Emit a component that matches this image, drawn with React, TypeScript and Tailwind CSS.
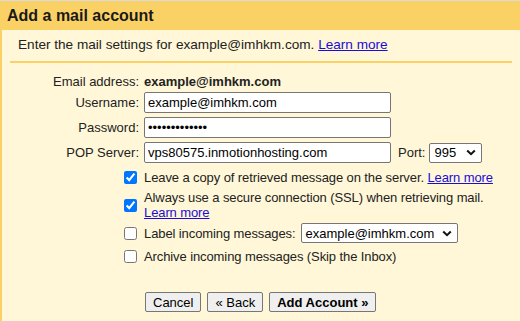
const Chevron = () => (
  <svg width="10" height="7" viewBox="0 0 10 7" className="shrink-0">
    <path d="M1.2 1.5 5 5.2 8.8 1.5" fill="none" stroke="#111" strokeWidth="2" />
  </svg>
);

const FakeSelect = ({ value, className }: { value: string; className: string }) => (
  <div
    className={`flex h-[20px] items-center justify-between rounded-[2px] border border-[#767676] bg-white pl-[4px] pr-[5px] text-black ${className}`}
  >
    <span className="whitespace-nowrap">{value}</span>
    <Chevron />
  </div>
);

const TextField = ({ value, type = 'text' }: { value: string; type?: string }) => (
  <input
    type={type}
    defaultValue={value}
    className="h-[21px] w-[247px] rounded-[2px] border border-[#767676] bg-white px-[3px] text-black outline-none"
  />
);

const Link = ({ children }: { children: string }) => (
  <a href="#" className="text-[#1a0dd6] underline">
    {children}
  </a>
);

export default function App() {
  return (
    <div className="h-[321px] w-[520px] overflow-hidden border-t border-[#dadada] bg-[#fff7d8] font-['Liberation_Sans',Arial,sans-serif] text-[13px] leading-[15px] text-[#222]">
      {/* Title bar */}
      <div className="flex h-[29px] items-center bg-[#fad165] pl-[7px]">
        <h1 className="text-[16px] font-bold leading-[20px] text-[#1a1a1a]">Add a mail account</h1>
      </div>

      <div className="h-full border-l-2 border-[#fad165]">
        <p className="whitespace-nowrap pl-[16px] pt-[7px] text-[13.6px] leading-[16px]">
          Enter the mail settings for example@imhkm.com. <Link>Learn more</Link>
        </p>
        <div className="ml-[8px] mt-[8px] h-[2px] w-[502px] bg-[#fad165]" />

        {/* Fields */}
        <div className="mt-[8px] flex h-[20px] items-center">
          <span className="w-[137px] text-right">Email address:</span>
          <span className="ml-[5px] font-bold">example@imhkm.com</span>
        </div>
        <div className="mt-[1px] flex h-[21px] items-center">
          <span className="w-[137px] text-right">Username:</span>
          <div className="ml-[5px]">
            <TextField value="example@imhkm.com" />
          </div>
        </div>
        <div className="mt-[4px] flex h-[21px] items-center">
          <span className="w-[137px] text-right">Password:</span>
          <div className="ml-[5px]">
            <TextField value="examplepass12" type="password" />
          </div>
        </div>
        <div className="mt-[4px] flex h-[21px] items-center">
          <span className="w-[137px] text-right">POP Server:</span>
          <div className="ml-[5px]">
            <TextField value="vps80575.inmotionhosting.com" />
          </div>
          <span className="ml-[7px]">Port:</span>
          <FakeSelect value="995" className="ml-[4px] w-[53px]" />
        </div>

        {/* Options */}
        <div className="tracking-[-0.1px]">
          <div className="mt-[5px] flex h-[18px] items-center pl-[122px]">
            <input type="checkbox" defaultChecked className="h-[13px] w-[13px]" />
            <span className="ml-[7px] whitespace-nowrap">
              Leave a copy of retrieved message on the server. <Link>Learn more</Link>
            </span>
          </div>
          <div className="mt-[4px] flex items-center pl-[122px]">
            <input type="checkbox" defaultChecked className="h-[13px] w-[13px]" />
            <span className="ml-[7px] whitespace-nowrap">
              Always use a secure connection (SSL) when retrieving mail.
              <br />
              <Link>Learn more</Link>
            </span>
          </div>
          <div className="mt-[2px] flex h-[22px] items-center pl-[122px]">
            <input type="checkbox" className="h-[13px] w-[13px]" />
            <span className="ml-[7px] whitespace-nowrap">Label incoming messages:</span>
            <FakeSelect value="example@imhkm.com" className="ml-[5px] w-[157px] tracking-normal" />
          </div>
          <div className="mt-[3px] flex h-[19px] items-center pl-[122px]">
            <input type="checkbox" className="h-[13px] w-[13px]" />
            <span className="ml-[7px] whitespace-nowrap">Archive incoming messages (Skip the Inbox)</span>
          </div>
        </div>

        {/* Actions */}
        <div className="mt-[26px] flex gap-[6px] pl-[143px]">
          <button className="h-[20px] rounded-[2px] border border-[#767676] bg-[#efefef] px-[7px] text-black">
            Cancel
          </button>
          <button className="h-[20px] rounded-[2px] border border-[#767676] bg-[#efefef] px-[7px] text-black">
            « Back
          </button>
          <button className="h-[20px] rounded-[2px] border border-[#767676] bg-[#efefef] px-[7px] font-bold text-black">
            Add Account »
          </button>
        </div>
      </div>
    </div>
  );
}
